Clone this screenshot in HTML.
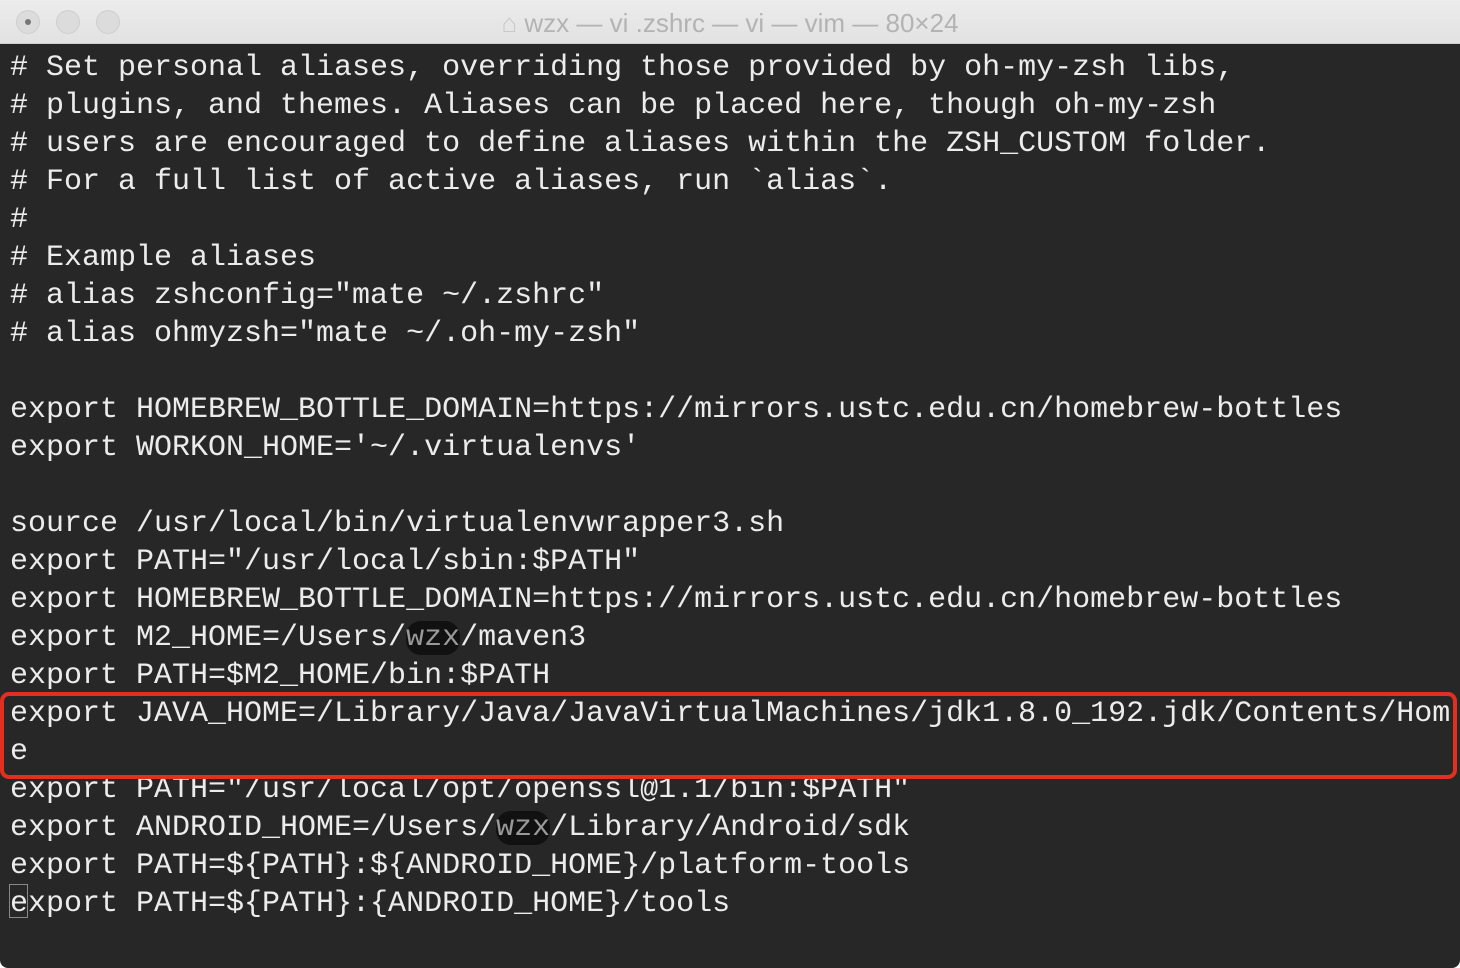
<!DOCTYPE html>
<html><head><meta charset="utf-8"><style>
html,body{margin:0;padding:0;background:#fff;}
.win{position:relative;width:1460px;height:968px;background:#272727;border-radius:0 0 8px 8px;overflow:hidden;}
.title{position:absolute;left:0;top:0;width:1460px;height:44px;background:linear-gradient(#ececec,#e2e2e2);border-bottom:1px solid #cfcfcf;box-sizing:border-box;}
.dot{position:absolute;top:10px;width:24px;height:24px;border-radius:50%;background:#dcdcdc;border:1px solid #cfcfcf;box-sizing:border-box;}
.dot.a::after{content:"";position:absolute;left:8px;top:8px;width:6px;height:6px;border-radius:50%;background:#777;}
.ttl{position:absolute;top:8px;left:0;width:1460px;text-align:center;font:26px "Liberation Sans",sans-serif;color:#b3b3b3;}
pre{position:absolute;left:10px;top:49px;margin:0;font:30px/38px "Liberation Mono",monospace;color:#ececec;letter-spacing:0;}
.box{position:absolute;left:0;top:692px;width:1457px;height:87px;border:4px solid #e1301f;border-radius:9px;box-sizing:border-box;}
.blur{border-radius:15px;background:#111;color:#999;}
.cur{position:absolute;left:9px;top:884px;width:17px;height:32px;border:1px solid #888;}
</style></head><body><div class="win">
<div class="title">
<div class="dot a" style="left:16px"></div><div class="dot" style="left:56px"></div><div class="dot" style="left:96px"></div>
<div class="ttl"><span style="color:#c8c8c8">&#8962;</span> wzx — vi .zshrc — vi — vim — 80×24</div>
</div>
<pre># Set personal aliases, overriding those provided by oh-my-zsh libs,
# plugins, and themes. Aliases can be placed here, though oh-my-zsh
# users are encouraged to define aliases within the ZSH_CUSTOM folder.
# For a full list of active aliases, run `alias`.
#
# Example aliases
# alias zshconfig="mate ~/.zshrc"
# alias ohmyzsh="mate ~/.oh-my-zsh"

export HOMEBREW_BOTTLE_DOMAIN=https://mirrors.ustc.edu.cn/homebrew-bottles
export WORKON_HOME='~/.virtualenvs'

source /usr/local/bin/virtualenvwrapper3.sh
export PATH="/usr/local/sbin:$PATH"
export HOMEBREW_BOTTLE_DOMAIN=https://mirrors.ustc.edu.cn/homebrew-bottles
export M2_HOME=/Users/<span class="blur">wzx</span>/maven3
export PATH=$M2_HOME/bin:$PATH
export JAVA_HOME=/Library/Java/JavaVirtualMachines/jdk1.8.0_192.jdk/Contents/Hom
e
export PATH="/usr/local/opt/openssl@1.1/bin:$PATH"
export ANDROID_HOME=/Users/<span class="blur">wzx</span>/Library/Android/sdk
export PATH=${PATH}:${ANDROID_HOME}/platform-tools
export PATH=${PATH}:{ANDROID_HOME}/tools</pre>
<div class="cur"></div>
<div class="box"></div>
</div></body></html>
